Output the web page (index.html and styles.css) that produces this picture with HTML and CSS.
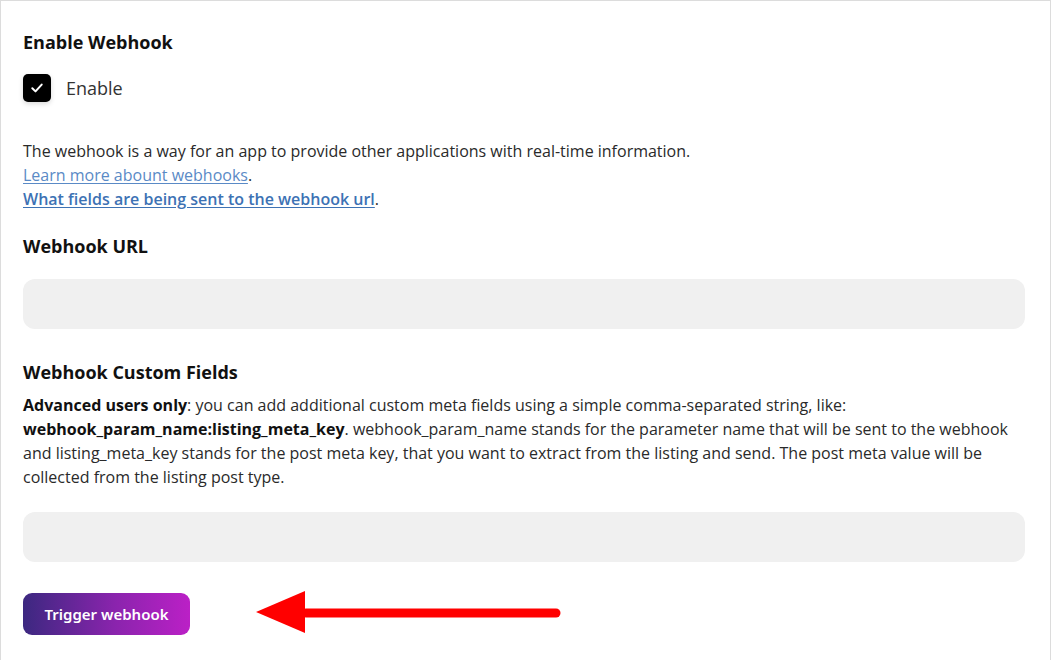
FILE: index.html
```html
<!DOCTYPE html>
<html>
<head>
<meta charset="utf-8">
<link rel="stylesheet" href="styles.css">
</head>
<body>
<div class="card">
  <h3 class="title">Enable Webhook</h3>
  <label class="check-row">
    <span class="checkbox">
      <svg width="14" height="14" viewBox="0 0 14 14"><path d="M2.3 7.3 L5.5 10.4 L11.7 3.6" fill="none" stroke="#fff" stroke-width="2" stroke-linecap="round" stroke-linejoin="round"/></svg>
    </span>
    <span class="check-label">Enable</span>
  </label>
  <p class="desc">The webhook is a way for an app to provide other applications with real-time information.<br><a class="link" href="#">Learn more abount webhooks</a>.<br><a class="link link-strong" href="#">What fields are being sent to the webhook url</a>.</p>
  <h3 class="title">Webhook URL</h3>
  <div class="input"></div>
  <h3 class="title title-tight">Webhook Custom Fields</h3>
  <p class="desc desc-tight"><strong>Advanced users only</strong>: you can add additional custom meta fields using a simple comma-separated string, like: <strong>webhook_param_name:listing_meta_key</strong>. webhook_param_name stands for the parameter name that will be sent to the webhook and listing_meta_key stands for the post meta key, that you want to extract from the listing and send. The post meta value will be collected from the listing post type.</p>
  <div class="input input-flush"></div>
  <div class="actions">
    <button class="btn">Trigger webhook</button>
    <svg class="arrow" width="320" height="50" viewBox="0 0 320 50"><line x1="50" y1="24" x2="300" y2="24" stroke="#ff0000" stroke-width="9" stroke-linecap="round"/><polygon points="0,23 49,2 49,44" fill="#ff0000"/></svg>
  </div>
</div>
</body>
</html>
```
FILE: styles.css
```css
html, body { margin: 0; padding: 0; background: #fff; }
body { font-family: "Open Sans", "Liberation Sans", sans-serif; color: #222; }
.card {
  box-sizing: border-box;
  width: 1051px;
  height: 660px;
  border: 1px solid #dcdcdc;
  border-bottom: none;
  padding: 29px 25px 0 22px;
}
.title {
  margin: 0;
  font-size: 18px;
  font-weight: 700;
  line-height: 24px;
  color: #111;
}
.title-tight { margin-top: 31px; }
.check-row {
  display: flex;
  align-items: center;
  gap: 15px;
  margin-top: 20px;
}
.checkbox {
  width: 28px;
  height: 28px;
  background: #000;
  border-radius: 5px;
  display: flex;
  align-items: center;
  justify-content: center;
  box-shadow: 0 2px 5px rgba(0,0,0,0.15);
}
.check-label { font-size: 18px; color: #333; }
.desc {
  margin: 37px 0 23px;
  font-size: 16px;
  line-height: 24px;
  color: #2a2a2a;
}
.desc-tight { margin: 9px 0 23px; }
.desc strong { font-weight: 700; color: #111; }
.link { color: #5a8ac6; text-decoration: underline; text-underline-offset: 2px; }
.link-strong { color: #3d72b4; font-weight: 600; }
.input {
  height: 50px;
  margin-top: 21px;
  background: #f0f0f0;
  border-radius: 12px;
}
.input-flush { margin-top: 0; }
.actions {
  display: flex;
  align-items: center;
  gap: 66px;
  margin-top: 27px;
}
.btn {
  width: 167px;
  height: 42px;
  border: none;
  border-radius: 9px;
  background: linear-gradient(90deg, #3c2880 0%, #8a24ad 55%, #bb20c6 100%);
  color: #fff;
  font-family: "Noto Sans", "Open Sans", sans-serif;
  font-weight: 600;
  font-size: 15px;
  padding: 0;
}
.arrow { display: block; }
```
